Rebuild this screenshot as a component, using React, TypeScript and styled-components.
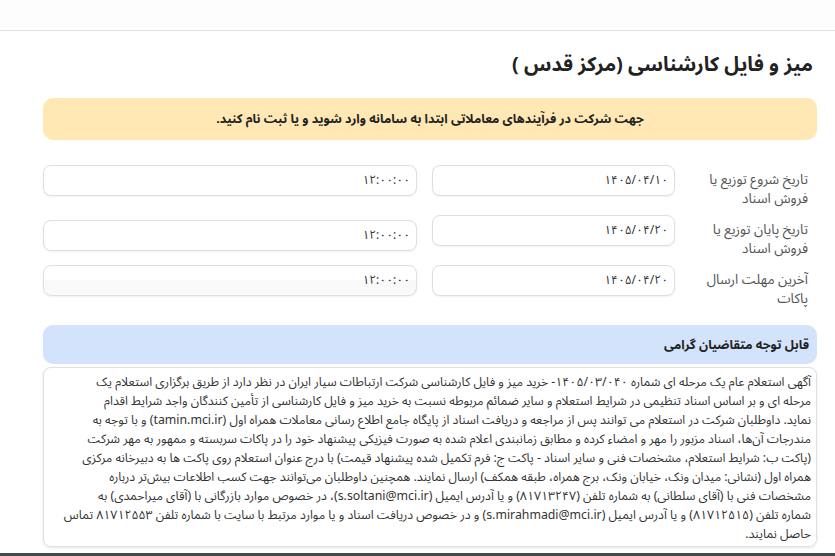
import * as React from 'react';
import styled, { createGlobalStyle } from 'styled-components';

const GlobalStyle = createGlobalStyle`
    body {
        margin: 0;
        background: #ffffff;
        font-family: "Noto Sans Arabic", "Vazirmatn", "DejaVu Sans", sans-serif;
        color: #333;
    }
`

const TopBar = styled.div`
    height: 30px;
    background: #fdfdfd;
    border-bottom: 1px solid #e2e2e2;
`

const Page = styled.div`
    direction: rtl;
    padding: 0 18px 0 43px;
`

const Title = styled.h1`
    margin: 18px 4px 0 0;
    font-size: 20px;
    line-height: 32px;
    font-weight: 700;
    color: #222;
`

const Alert = styled.div`
    margin-top: 17px;
    height: 42px;
    border-radius: 10px;
    background: #ffe8b4;
    display: flex;
    align-items: center;
    justify-content: center;
    font-size: 12.5px;
    font-weight: 700;
    color: #222;
`

const Form = styled.div`
    margin-top: 25px;
    display: flex;
    flex-direction: column;
    gap: 7px;
`

const Row = styled.div`
    display: grid;
    grid-template-columns: 142px 243px 1fr;
    align-items: start;
`

const Label = styled.div`
    padding: 5px 9px 0 15px;
    font-size: 13.5px;
    line-height: 19px;
    color: #555;
`

const Field = styled.div<{ $shift?: number; $faded?: boolean; $gap?: number }>`
    height: 31px;
    box-sizing: border-box;
    margin-top: ${p => p.$shift ?? 0}px;
    margin-right: ${p => p.$gap ?? 0}px;
    border: 1px solid #dedede;
    border-radius: 8px;
    background: ${p => p.$faded ? 'linear-gradient(#fff 50%, #f9f9f9 50%)' : '#fff'};
    box-shadow: 0 1px 2px rgba(0, 0, 0, 0.06);
    display: flex;
    align-items: center;
    padding: 0 6px;
    font-size: 12px;
    color: #333;
`

const Notice = styled.div`
    margin-top: 17px;
`

const NoticeHead = styled.div`
    height: 39px;
    border-radius: 10px;
    background: #d4e3fc;
    display: flex;
    align-items: center;
    padding: 0 8px;
    font-size: 12.5px;
    font-weight: 700;
    color: #222;
`

const NoticeBody = styled.div`
    margin-top: 3px;
    box-sizing: border-box;
    height: 180px;
    border: 1px solid #e0e0e0;
    border-radius: 8px;
    box-shadow: 0 1px 3px rgba(0, 0, 0, 0.1);
    padding: 5px 5px 2px 8px;
    font-size: 12.3px;
    line-height: 19px;
    color: #333;
    text-align: right;
`

const Line = styled.div`
    white-space: nowrap;
`

const Footer = styled.div`
    margin-top: 6px;
    height: 20px;
    background: #45494d;
`

const rows = [
    { label: 'تاریخ شروع توزیع یا فروش اسناد', date: '۱۴۰۵/۰۴/۱۰', time: '۱۲:۰۰:۰۰', shift: 0, faded: false },
    { label: 'تاریخ پایان توزیع یا فروش اسناد', date: '۱۴۰۵/۰۴/۲۰', time: '۱۲:۰۰:۰۰', shift: 5, faded: false },
    { label: 'آخرین مهلت ارسال پاکات', date: '۱۴۰۵/۰۴/۲۰', time: '۱۲:۰۰:۰۰', shift: 0, faded: true },
];

const noticeLines = [
    'آگهی استعلام عام یک مرحله ای شماره ۱۴۰۵/۰۳/۰۴۰- خرید میز و فایل کارشناسی شرکت ارتباطات سیار ایران در نظر دارد از طریق برگزاری استعلام یک',
    'مرحله ای و بر اساس اسناد تنظیمی در شرایط استعلام و سایر ضمائم مربوطه نسبت به خرید میز و فایل کارشناسی از تأمین کنندگان واجد شرایط اقدام',
    'نماید. داوطلبان شرکت در استعلام می توانند پس از مراجعه و دریافت اسناد از پایگاه جامع اطلاع رسانی معاملات همراه اول (tamin.mci.ir) و با توجه به',
    'مندرجات آن‌ها، اسناد مزبور را مهر و امضاء کرده و مطابق زمانبندی اعلام شده به صورت فیزیکی پیشنهاد خود را در پاکات سربسته و ممهور به مهر شرکت',
    '(پاکت ب: شرایط استعلام، مشخصات فنی و سایر اسناد - پاکت ج: فرم تکمیل شده پیشنهاد قیمت) با درج عنوان استعلام روی پاکت ها به دبیرخانه مرکزی',
    'همراه اول (نشانی: میدان ونک، خیابان ونک، برج همراه، طبقه همکف) ارسال نمایند. همچنین داوطلبان می‌توانند جهت کسب اطلاعات بیش‌تر درباره',
    'مشخصات فنی با (آقای سلطانی) به شماره تلفن (۸۱۷۱۳۲۴۷) و یا آدرس ایمیل (s.soltani@mci.ir)، در خصوص موارد بازرگانی با (آقای میراحمدی) به',
    'شماره تلفن (۸۱۷۱۲۵۱۵) و یا آدرس ایمیل (s.mirahmadi@mci.ir) و در خصوص دریافت اسناد و یا موارد مرتبط با سایت با شماره تلفن ۸۱۷۱۲۵۵۳ تماس',
    'حاصل نمایند.',
];

const App: React.FC = () => {
    return (
        <>
            <GlobalStyle />
            <TopBar />
            <Page>
                <Title>میز و فایل کارشناسی (مرکز قدس )</Title>
                <Alert>جهت شرکت در فرآیندهای معاملاتی ابتدا به سامانه وارد شوید و یا ثبت نام کنید.</Alert>
                <Form>
                    {rows.map(r => (
                        <Row key={r.label}>
                            <Label>{r.label}</Label>
                            <Field>{r.date}</Field>
                            <Field $gap={15} $shift={r.shift} $faded={r.faded}>{r.time}</Field>
                        </Row>
                    ))}
                </Form>
                <Notice>
                    <NoticeHead>قابل توجه متقاضیان گرامی</NoticeHead>
                    <NoticeBody>
                        {noticeLines.map((l, i) => <Line key={i}>{l}</Line>)}
                    </NoticeBody>
                </Notice>
            </Page>
            <Footer />
        </>
    )
}

export default App;
